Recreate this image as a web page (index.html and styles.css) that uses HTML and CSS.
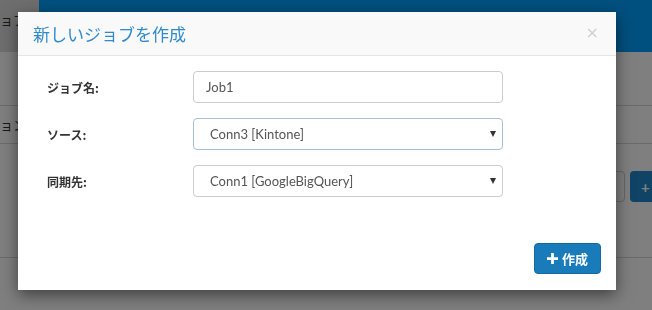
FILE: index.html
```html
<!DOCTYPE html>
<html lang="ja">
<head>
    <meta charset="UTF-8">
    <title>ジョブ管理</title>
    <link rel="stylesheet" href="styles.css">
</head>
<body>
    <!-- Page behind the modal -->
    <div class="page">
        <div class="topbar">
            <div class="topbar-tab">ョブ</div>
            <div class="topbar-main"></div>
        </div>
        <div class="list">
            <div class="list-row">ョン</div>
        </div>
        <div class="list-actions">
            <button class="btn btn-outline">更新</button>
            <button class="btn btn-dark">+</button>
        </div>
        <div class="list-footer"></div>
    </div>

    <div class="backdrop"></div>

    <!-- Create Job Modal -->
    <div class="modal">
        <div class="modal-header">
            <h4 class="modal-title">新しいジョブを作成</h4>
            <span class="modal-close">&times;</span>
        </div>
        <div class="modal-body">
            <div class="form-row">
                <label class="form-label">ジョブ名:</label>
                <input class="form-input" type="text" value="Job1">
            </div>
            <div class="form-row">
                <label class="form-label">ソース:</label>
                <div class="form-select is-focused">
                    <span>Conn3 [Kintone]</span>
                    <span class="caret"></span>
                </div>
            </div>
            <div class="form-row">
                <label class="form-label">同期先:</label>
                <div class="form-select">
                    <span>Conn1 [GoogleBigQuery]</span>
                    <span class="caret"></span>
                </div>
            </div>
        </div>
        <div class="modal-footer">
            <button class="btn btn-primary">
                <svg class="icon-plus" viewBox="0 0 12 12" width="11" height="11"><path d="M4.5 0h3v4.5H12v3H7.5V12h-3V7.5H0v-3h4.5z" fill="currentColor"/></svg>
                作成
            </button>
        </div>
    </div>
</body>
</html>
```

FILE: styles.css
```css
body {
    margin: 0;
    font-family: "Segoe UI", "Lato", "Noto Sans CJK JP", sans-serif;
    font-size: 13px;
    color: #333;
    background: #fff;
    overflow: hidden;
}

.page {
    width: 652px;
    height: 310px;
}

.topbar {
    display: flex;
    height: 52px;
}

.topbar-tab {
    width: 39px;
    background: #dcdcdc;
    white-space: nowrap;
    padding-top: 10px;
    box-sizing: border-box;
    font-size: 13px;
    font-family: "Noto Sans CJK JP", sans-serif;
}

.topbar-main {
    flex: 1;
    background: #00a0fe;
}

.list {
    margin-top: 53px;
    border-top: 1px solid #d6d6d6;
    border-bottom: 1px solid #d6d6d6;
}

.list-row {
    height: 37px;
    line-height: 37px;
    font-family: "Noto Sans CJK JP", sans-serif;
}

.list-actions {
    display: flex;
    justify-content: flex-end;
    gap: 5px;
    margin-top: 27px;
}

.list-footer {
    margin-top: 55px;
    border-top: 1px solid #d6d6d6;
}

.btn {
    font-family: inherit;
    font-size: 13px;
    height: 31px;
    padding: 0 12px;
    border-radius: 4px;
    border: 1px solid transparent;
    cursor: pointer;
}

.btn-outline {
    background: #fff;
    border-color: #ccc;
}

.btn-dark {
    width: 22px;
    padding: 0 0 0 10px;
    border-radius: 4px 0 0 4px;
    background: #1e88cc;
    color: #fff;
    font-weight: bold;
    font-size: 15px;
    text-align: left;
}

.backdrop {
    position: fixed;
    inset: 0;
    background: rgba(0, 0, 0, 0.5);
}

.modal {
    position: absolute;
    top: 12px;
    left: 18px;
    width: 598px;
    height: 278px;
    background: #fff;
    box-shadow: 0 5px 15px rgba(0, 0, 0, 0.5);
    display: flex;
    flex-direction: column;
}

.modal-header {
    height: 43px;
    background: #f9f9f9;
    border-bottom: 1px solid #e5e5e5;
    display: flex;
    align-items: center;
    justify-content: space-between;
    padding: 0 17px 0 15px;
}

.modal-title {
    margin: 0;
    font-size: 17px;
    font-weight: normal;
    color: #2f8bcc;
    font-family: "Noto Sans CJK JP", sans-serif;
}

.modal-close {
    font-size: 16px;
    color: #d0d0d0;
    font-family: "DejaVu Sans", sans-serif;
    line-height: 1;
    margin-top: -2px;
}

.modal-body {
    flex: 1;
    padding: 15px 0 0 29px;
    display: flex;
    flex-direction: column;
    gap: 15px;
}

.form-row {
    display: flex;
    align-items: center;
}

.form-label {
    width: 146px;
    font-size: 12px;
    font-weight: bold;
    color: #333;
    font-family: "Noto Sans CJK JP", sans-serif;
}

.form-input,
.form-select {
    width: 310px;
    height: 32px;
    box-sizing: border-box;
    border: 1px solid #ccc;
    border-radius: 4px;
    font-family: inherit;
    font-size: 13px;
    color: #555;
}

.form-input {
    padding: 0 12px;
}

.form-select {
    display: flex;
    align-items: center;
    justify-content: space-between;
    padding: 0 6px 0 16px;
}

.form-select.is-focused {
    border-color: #a7bfd9;
}

.caret {
    width: 0;
    height: 0;
    border-left: 3px solid transparent;
    border-right: 3px solid transparent;
    border-top: 6px solid #333;
}

.modal-footer {
    display: flex;
    justify-content: flex-end;
    padding: 0 15px 16px 0;
}

.btn-primary {
    background: #1a7bbb;
    border-color: #166aa3;
    color: #fff;
    font-weight: bold;
    display: flex;
    align-items: center;
    gap: 4px;
    padding: 0 12px;
    font-family: "Noto Sans CJK JP", sans-serif;
}

.icon-plus {
    display: block;
}
```
